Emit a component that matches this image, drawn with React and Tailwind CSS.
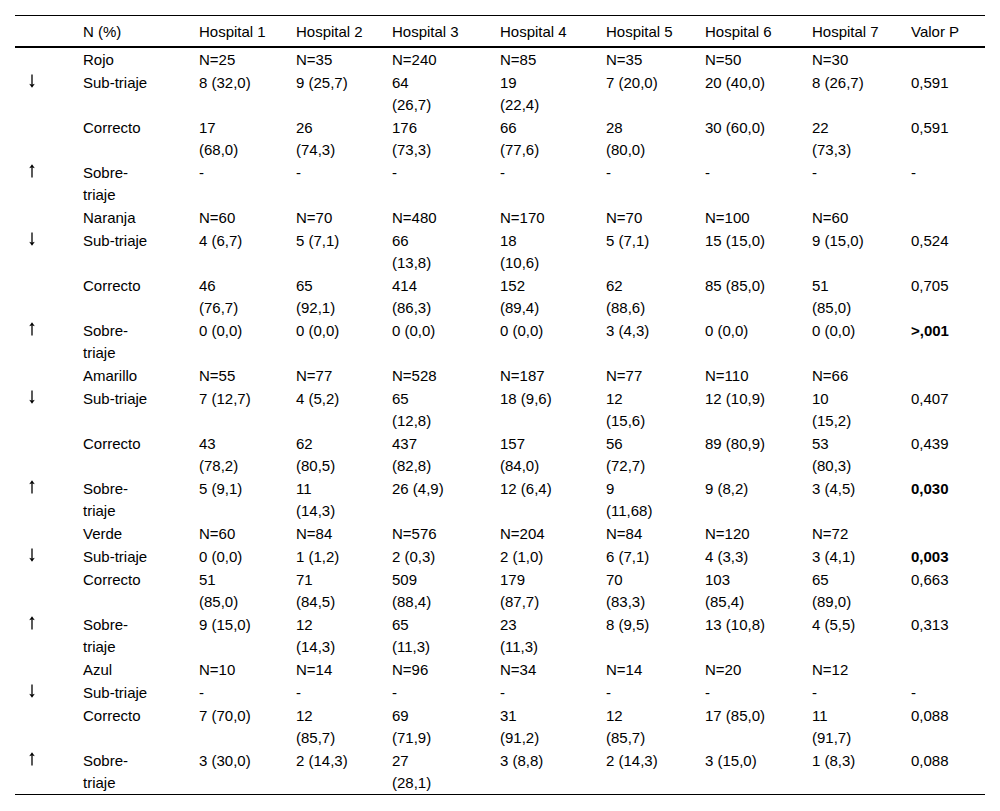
const headers = ["", "N (%)", "Hospital 1", "Hospital 2", "Hospital 3", "Hospital 4", "Hospital 5", "Hospital 6", "Hospital 7", "Valor P"];

const widths = ["w-[55px]", "w-[116px]", "w-[97px]", "w-[96px]", "w-[108px]", "w-[106px]", "w-[99px]", "w-[107px]", "w-[99px]", "w-[87px]"];

const dash = ["-", "-", "-", "-", "-", "-", "-"];

// "\n" marks where the reference wraps a cell
const groups = [
  {
    name: "Rojo",
    n: ["N=25", "N=35", "N=240", "N=85", "N=35", "N=50", "N=30"],
    sub: [["8 (32,0)", "9 (25,7)", "64\n(26,7)", "19\n(22,4)", "7 (20,0)", "20 (40,0)", "8 (26,7)"], "0,591"],
    ok: [["17\n(68,0)", "26\n(74,3)", "176\n(73,3)", "66\n(77,6)", "28\n(80,0)", "30 (60,0)", "22\n(73,3)"], "0,591"],
    over: [dash, "-"],
  },
  {
    name: "Naranja",
    n: ["N=60", "N=70", "N=480", "N=170", "N=70", "N=100", "N=60"],
    sub: [["4 (6,7)", "5 (7,1)", "66\n(13,8)", "18\n(10,6)", "5 (7,1)", "15 (15,0)", "9 (15,0)"], "0,524"],
    ok: [["46\n(76,7)", "65\n(92,1)", "414\n(86,3)", "152\n(89,4)", "62\n(88,6)", "85 (85,0)", "51\n(85,0)"], "0,705"],
    over: [["0 (0,0)", "0 (0,0)", "0 (0,0)", "0 (0,0)", "3 (4,3)", "0 (0,0)", "0 (0,0)"], ">,001", true],
  },
  {
    name: "Amarillo",
    n: ["N=55", "N=77", "N=528", "N=187", "N=77", "N=110", "N=66"],
    sub: [["7 (12,7)", "4 (5,2)", "65\n(12,8)", "18 (9,6)", "12\n(15,6)", "12 (10,9)", "10\n(15,2)"], "0,407"],
    ok: [["43\n(78,2)", "62\n(80,5)", "437\n(82,8)", "157\n(84,0)", "56\n(72,7)", "89 (80,9)", "53\n(80,3)"], "0,439"],
    over: [["5 (9,1)", "11\n(14,3)", "26 (4,9)", "12 (6,4)", "9\n(11,68)", "9 (8,2)", "3 (4,5)"], "0,030", true],
  },
  {
    name: "Verde",
    n: ["N=60", "N=84", "N=576", "N=204", "N=84", "N=120", "N=72"],
    sub: [["0 (0,0)", "1 (1,2)", "2 (0,3)", "2 (1,0)", "6 (7,1)", "4 (3,3)", "3 (4,1)"], "0,003", true],
    ok: [["51\n(85,0)", "71\n(84,5)", "509\n(88,4)", "179\n(87,7)", "70\n(83,3)", "103\n(85,4)", "65\n(89,0)"], "0,663"],
    over: [["9 (15,0)", "12\n(14,3)", "65\n(11,3)", "23\n(11,3)", "8 (9,5)", "13 (10,8)", "4 (5,5)"], "0,313"],
  },
  {
    name: "Azul",
    n: ["N=10", "N=14", "N=96", "N=34", "N=14", "N=20", "N=12"],
    sub: [dash, "-"],
    ok: [["7 (70,0)", "12\n(85,7)", "69\n(71,9)", "31\n(91,2)", "12\n(85,7)", "17 (85,0)", "11\n(91,7)"], "0,088"],
    over: [["3 (30,0)", "2 (14,3)", "27\n(28,1)", "3 (8,8)", "2 (14,3)", "3 (15,0)", "1 (8,3)"], "0,088"],
  },
];

const Arrow = ({ up }) => (
  <svg width="8" height="14" viewBox="0 0 8 14" className="block mt-[2px]" aria-label={up ? "↑" : "↓"}>
    {up ? (
      <>
        <path d="M4 13.5V3" stroke="black" strokeWidth="1.3" />
        <path d="M1.2 4.2 L4 0.3 L6.8 4.2 L4 3.2 Z" fill="black" />
      </>
    ) : (
      <>
        <path d="M4 0.5V11" stroke="black" strokeWidth="1.3" />
        <path d="M1.2 9.8 L4 13.7 L6.8 9.8 L4 10.8 Z" fill="black" />
      </>
    )}
  </svg>
);

const Cell = ({ children, bold }) => (
  <td className={`align-top pl-[13px] py-[0.5px] whitespace-pre-line ${bold ? "font-bold" : ""}`}>
    {children}
  </td>
);

const Row = ({ arrow, label, values, p, bold }) => (
  <tr>
    <Cell>{arrow}</Cell>
    <Cell>{label}</Cell>
    {values.map((v, i) => (
      <Cell key={i}>{v}</Cell>
    ))}
    <Cell bold={bold}>{p}</Cell>
  </tr>
);

export default function App() {
  return (
    <div
      className="bg-white p-[15px] text-black text-[15px] leading-[22px] min-h-[811px]"
      style={{ fontFamily: '"Liberation Sans", Arial, sans-serif' }}
    >
      <table className="w-full table-fixed border-collapse border-t border-black">
        <colgroup>
          {widths.map((w, i) => (
            <col key={i} className={w} />
          ))}
        </colgroup>
        <thead>
          <tr className="border-b-2 border-black">
            {headers.map((h, i) => (
              <th key={i} className="text-left font-normal pl-[13px] pt-[5px] pb-[3px] whitespace-nowrap">
                {h}
              </th>
            ))}
          </tr>
        </thead>
        <tbody className="border-b border-black">
          {groups.map((g) => (
            <>
              <Row key={g.name} arrow="" label={g.name} values={g.n} p="" />
              <Row arrow={<Arrow />} label="Sub-triaje" values={g.sub[0]} p={g.sub[1]} bold={g.sub[2]} />
              <Row arrow="" label="Correcto" values={g.ok[0]} p={g.ok[1]} bold={g.ok[2]} />
              <Row arrow={<Arrow up />} label={"Sobre-\ntriaje"} values={g.over[0]} p={g.over[1]} bold={g.over[2]} />
            </>
          ))}
        </tbody>
      </table>
    </div>
  );
}
